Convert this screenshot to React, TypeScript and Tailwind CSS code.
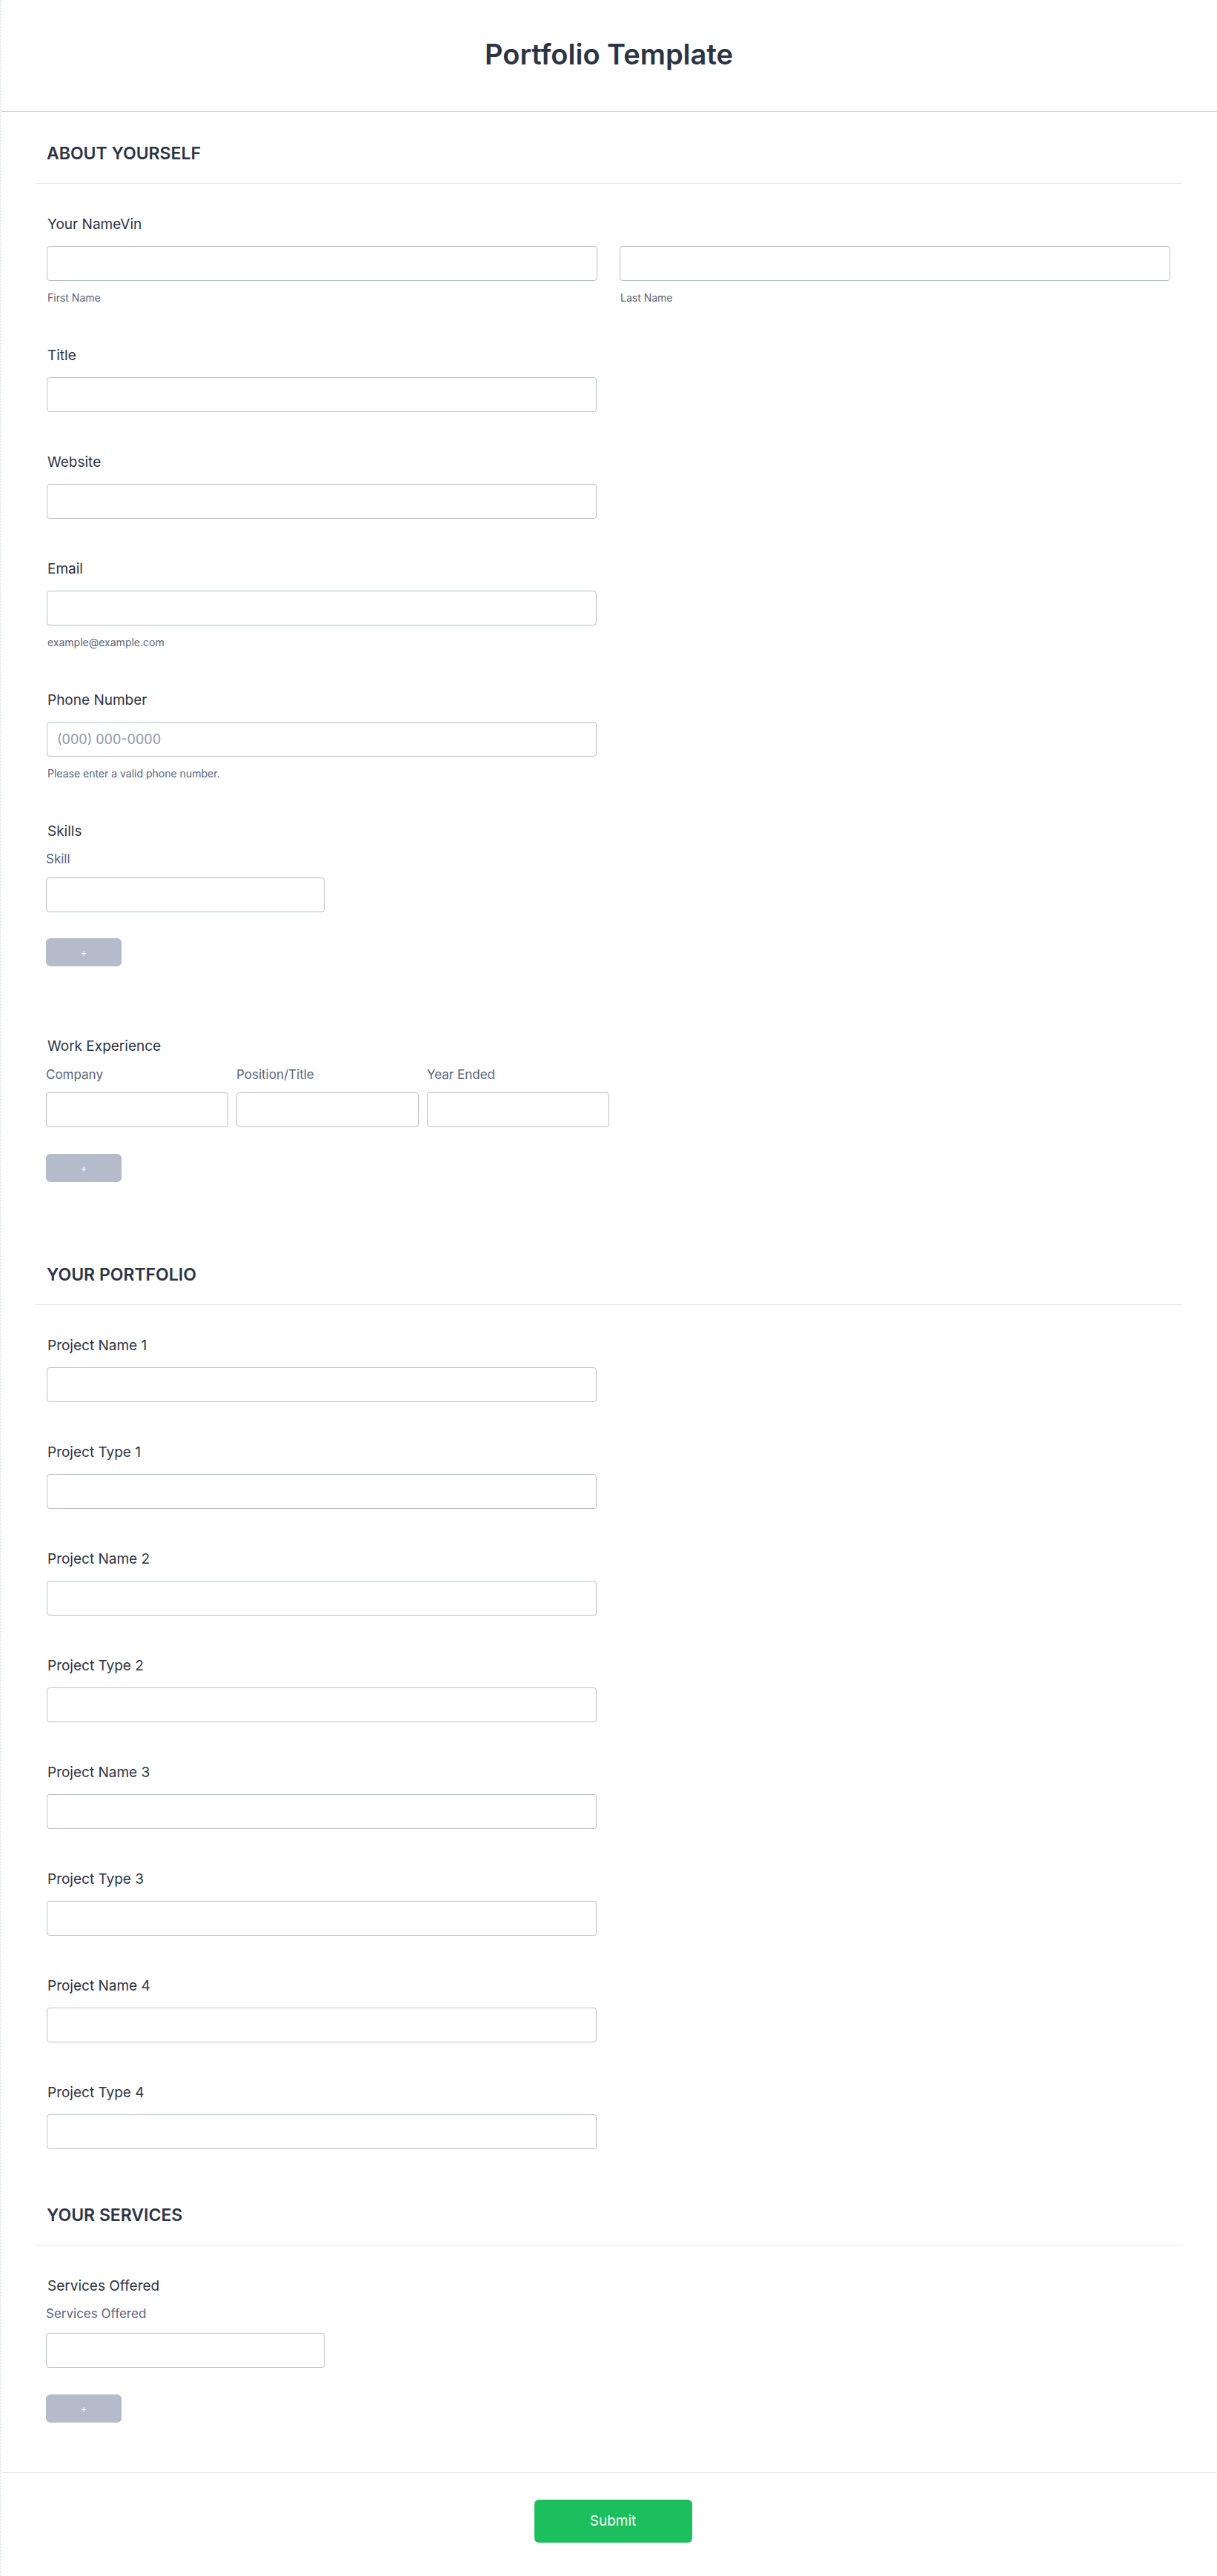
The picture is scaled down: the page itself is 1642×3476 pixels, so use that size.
import React from "react";

const Input = ({ className = "", placeholder }: { className?: string; placeholder?: string }) => (
  <input
    type="text"
    placeholder={placeholder}
    className={`block h-[47px] rounded-[4px] border border-[#b8bfcc] bg-white px-[13px] text-[18px] text-[#2c3345] outline-none placeholder:text-[#8f97a8] ${className}`}
  />
);

const Label = ({ children, className = "" }: { children: React.ReactNode; className?: string }) => (
  <div className={`text-[19px] leading-[24px] text-[#2c3345] ${className}`}>{children}</div>
);

// small helper text under an input
const SubLabel = ({ children, className = "" }: { children: React.ReactNode; className?: string }) => (
  <div className={`text-[14px] leading-[20px] text-[#57647e] ${className}`}>{children}</div>
);

// column header above an input (repeating widgets)
const ColLabel = ({ children, className = "" }: { children: React.ReactNode; className?: string }) => (
  <div className={`-ml-[2px] text-[17px] leading-[20px] text-[#57647e] ${className}`}>{children}</div>
);

const AddButton = ({ className = "" }: { className?: string }) => (
  <button
    type="button"
    className={`-ml-[2px] flex h-[38px] w-[102px] items-center justify-center rounded-[6px] bg-[#b4bccc] text-[13px] leading-none text-white ${className}`}
  >
    +
  </button>
);

const SimpleField = ({ label, sub, placeholder, className = "" }: { label: string; sub?: string; placeholder?: string; className?: string }) => (
  <div className={className}>
    <Label>{label}</Label>
    <Input className="mt-[17px] -ml-[1px] w-[742px]" placeholder={placeholder} />
    {sub && <SubLabel className="mt-[13px]">{sub}</SubLabel>}
  </div>
);

const SectionHeading = ({ title, className = "" }: { title: string; className?: string }) => (
  <div className={`border-b border-[#e6e8ee] px-[17px] pb-[25px] ${className}`}>
    <h2 className="-ml-[1px] text-[23px] font-semibold leading-[30px] text-[#2c3345]">{title}</h2>
  </div>
);

const projects = [
  "Project Name 1",
  "Project Type 1",
  "Project Name 2",
  "Project Type 2",
  "Project Name 3",
  "Project Type 3",
  "Project Name 4",
  "Project Type 4",
];

export default function App() {
  return (
    <div className="min-h-screen border-l border-dotted border-[#d5d8de] bg-white font-['Inter',_sans-serif] text-[#2c3345]">
      <header className="flex h-[151px] items-center justify-center border-b border-[#cfd3db] pb-[4px]">
        <h1 className="text-[38px] font-semibold leading-[46px] text-[#2c3345]">Portfolio Template</h1>
      </header>

      <main className="px-[46px]">
        {/* about yourself */}
        <SectionHeading title="ABOUT YOURSELF" className="pt-[41px]" />
        <div className="flex flex-col gap-[56px] px-[17px] pt-[43px]">
          <div>
            <Label>Your NameVin</Label>
            <div className="mt-[17px] -ml-[1px] grid grid-cols-2 gap-[30px]">
              <div>
                <Input className="w-full" />
                <SubLabel className="mt-[13px] ml-[1px]">First Name</SubLabel>
              </div>
              <div>
                <Input className="w-full" />
                <SubLabel className="mt-[13px] ml-[1px]">Last Name</SubLabel>
              </div>
            </div>
          </div>
          <SimpleField label="Title" />
          <SimpleField label="Website" />
          <SimpleField label="Email" sub="example@example.com" />
          <SimpleField label="Phone Number" placeholder="(000) 000-0000" sub="Please enter a valid phone number." />
          <div>
            <Label>Skills</Label>
            <ColLabel className="mt-[15px]">Skill</ColLabel>
            <Input className="mt-[15px] -ml-[2px] w-[376px]" />
            <AddButton className="mt-[35px]" />
          </div>
        </div>

        <div className="mt-[96px] px-[17px]">
          <Label>Work Experience</Label>
          <div className="mt-[16px] -ml-[2px] flex gap-[11px]">
            {["Company", "Position/Title", "Year Ended"].map((c) => (
              <div key={c} className="w-[246px]">
                <div className="text-[17px] leading-[20px] text-[#57647e]">{c}</div>
                <Input className="mt-[14px] w-full" />
              </div>
            ))}
          </div>
          <AddButton className="mt-[36px]" />
        </div>

        {/* portfolio */}
        <SectionHeading title="YOUR PORTFOLIO" className="mt-[110px]" />
        <div className="flex flex-col gap-[56px] px-[17px] pt-[43px]">
          {projects.map((p) => (
            <SimpleField key={p} label={p} />
          ))}
        </div>

        {/* services */}
        <SectionHeading title="YOUR SERVICES" className="mt-[74px]" />
        <div className="px-[17px] pt-[43px]">
          <Label>Services Offered</Label>
          <ColLabel className="mt-[15px]">Services Offered</ColLabel>
          <Input className="mt-[16px] -ml-[2px] w-[376px]" />
          <AddButton className="mt-[36px]" />
        </div>
      </main>

      <footer className="mt-[67px] flex justify-center border-t border-[#e3e5ea] pb-[47px] pt-[36px]">
        <button
          type="button"
          className="ml-[11px] h-[58px] w-[213px] rounded-[6px] bg-[#1bbf5d] text-[19px] text-white"
        >
          Submit
        </button>
      </footer>
    </div>
  );
}
